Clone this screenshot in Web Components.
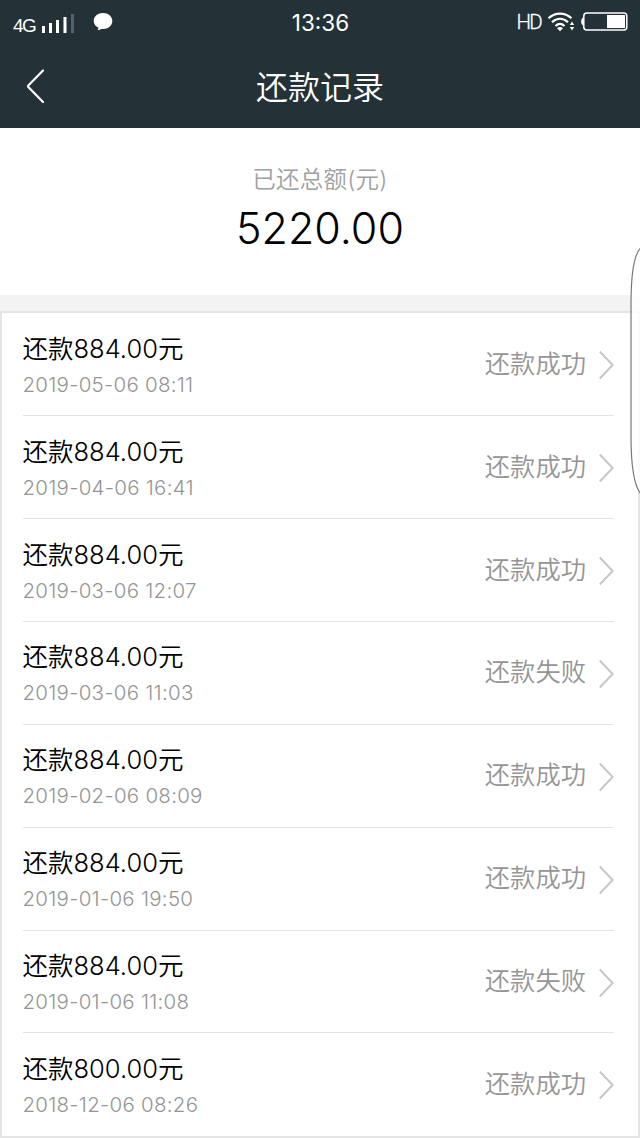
<!DOCTYPE html>
<html lang="zh-CN">
<head>
<meta charset="UTF-8">
<meta name="viewport" content="width=device-width, initial-scale=1.0">
<title>还款记录</title>
<style>
    body {
        margin: 0;
        background: #fff;
        font-family: Inter, "Noto Sans CJK SC", sans-serif;
        font-weight: 350;
    }
</style>
</head>
<body>
<repayment-page>
    <status-bar slot="status" time="13:36"></status-bar>
    <nav-header slot="header">还款记录</nav-header>
    <total-summary slot="summary" amount="5220.00">已还总额(元)</total-summary>
    <record-item amount="884.00" date="2019-05-06 08:11">还款成功</record-item>
    <record-item amount="884.00" date="2019-04-06 16:41">还款成功</record-item>
    <record-item amount="884.00" date="2019-03-06 12:07">还款成功</record-item>
    <record-item amount="884.00" date="2019-03-06 11:03">还款失败</record-item>
    <record-item amount="884.00" date="2019-02-06 08:09">还款成功</record-item>
    <record-item amount="884.00" date="2019-01-06 19:50">还款成功</record-item>
    <record-item amount="884.00" date="2019-01-06 11:08">还款失败</record-item>
    <record-item amount="800.00" date="2018-12-06 08:26">还款成功</record-item>
    <edge-handle slot="overlay"></edge-handle>
</repayment-page>

<script>
    class RepaymentPage extends HTMLElement {
        connectedCallback() {
            this.attachShadow({ mode: 'open' });
            this.shadowRoot.innerHTML = `
                <style>
                    :host {
                        display: flex;
                        flex-direction: column;
                        position: relative;
                        width: 640px;
                        height: 1138px;
                        overflow: hidden;
                    }

                    .top {
                        height: 128px;
                        background: #243137;
                        color: #fff;
                    }

                    .gap {
                        height: 16px;
                        background: #f3f3f3;
                    }

                    .list {
                        flex: 1;
                        box-sizing: border-box;
                        border: 2px solid #e5e5e5;
                        padding: 0 24px 0 21px;
                    }
                </style>
                <div class="top">
                    <slot name="status"></slot>
                    <slot name="header"></slot>
                </div>
                <slot name="summary"></slot>
                <div class="gap"></div>
                <div class="list"><slot></slot></div>
                <slot name="overlay"></slot>
            `;
        }
    }

    class StatusBar extends HTMLElement {
        connectedCallback() {
            this.attachShadow({ mode: 'open' });
            this.shadowRoot.innerHTML = `
                <style>
                    :host {
                        display: grid;
                        grid-template-columns: 1fr auto 1fr;
                        align-items: center;
                        height: 44px;
                        padding: 0 12px 0 13px;
                    }

                    .side {
                        display: flex;
                        align-items: center;
                    }

                    .right {
                        justify-content: flex-end;
                    }

                    .net {
                        width: 28px;
                        padding-top: 8px;
                        font: 19px "Liberation Sans", sans-serif;
                        letter-spacing: -1.5px;
                    }

                    .time {
                        padding-top: 1px;
                        font-size: 22.5px;
                        font-weight: 400;
                    }

                    .hd {
                        font: 300 20.5px Roboto, sans-serif;
                        letter-spacing: -1.7px;
                        margin-right: 5px;
                        -webkit-text-stroke: 0.3px #fff;
                    }

                    svg {
                        display: block;
                    }
                </style>
                <div class="side">
                    <span class="net">4G</span>
                    <svg width="74" height="44" fill="#fff">
                        <rect x="1" y="26" width="3" height="7"/>
                        <rect x="8" y="23" width="3" height="10"/>
                        <rect x="15" y="20" width="3" height="13"/>
                        <rect x="22.5" y="17" width="3" height="16"/>
                        <rect x="30" y="14" width="3" height="19" fill="#566167"/>
                        <path d="M62 13c5.2 0 9.3 3.5 9.3 8s-4.1 8-9.3 8l-2-.1c-.8.7-2 1.200-3.500 1 .7-.6 1-1.300 1-2.100-3-1.400-4.800-3.900-4.800-6.800 0-4.500 4.100-8 9.300-8z"/>
                    </svg>
                </div>
                <span class="time">${this.getAttribute('time')}</span>
                <div class="side right">
                    <span class="hd">HD</span>
                    <svg width="82" height="44" fill="none" stroke="#fff">
                        <g stroke-width="2.2">
                            <path d="M2.5 18.3c6.800-6.300 16.200-6.300 23 0"/>
                            <path d="M6 22.3c5-4.500 11-4.500 16 0"/>
                            <path d="M9.5 26c3-2.700 6-2.700 9 0"/>
                        </g>
                        <path d="M11 28.2c1.800-1.500 4.200-1.500 6 0l-3 3.100z" fill="#fff" stroke="none"/>
                        <path d="M26 21.5l2.200 3.500h-4.400zM26 30.500l2.200-3.500h-4.400z" fill="#fff" stroke="none"/>
                        <path d="M37 17.5c-2.500 1.500-2.500 6.500 0 8z" fill="#fff" stroke="none"/>
                        <rect x="37.8" y="12.9" width="43" height="17" rx="3" stroke-width="1.5"/>
                        <rect x="61" y="15" width="18" height="13" fill="#fff" stroke="none"/>
                    </svg>
                </div>
            `;
        }
    }

    class NavHeader extends HTMLElement {
        connectedCallback() {
            this.attachShadow({ mode: 'open' });
            this.shadowRoot.innerHTML = `
                <style>
                    :host {
                        display: grid;
                        grid-template-columns: 1fr auto 1fr;
                        align-items: center;
                        height: 84px;
                        padding: 0 24px;
                    }

                    .title {
                        padding-top: 3px;
                        font-size: 32px;
                        line-height: 81px;
                    }

                    svg {
                        display: block;
                    }
                </style>
                <svg width="24" height="36" fill="none" stroke="#fff" stroke-width="2.2" stroke-linecap="round" stroke-linejoin="round">
                    <path d="M19 2.5L4.3 17.5q-.7.8 0 1.6L19 34"/>
                </svg>
                <span class="title"><slot></slot></span>
            `;
        }
    }

    class TotalSummary extends HTMLElement {
        connectedCallback() {
            this.attachShadow({ mode: 'open' });
            this.shadowRoot.innerHTML = `
                <style>
                    :host {
                        display: flex;
                        flex-direction: column;
                        align-items: center;
                        box-sizing: border-box;
                        height: 167px;
                        padding-top: 35px;
                    }

                    .label {
                        color: #a0a0a0;
                        font-size: 23.5px;
                        letter-spacing: 0.2px;
                        line-height: 33px;
                    }

                    .amount {
                        color: #000;
                        font-size: 43px;
                        font-weight: 300;
                        line-height: 65px;
                    }
                </style>
                <span class="label"><slot></slot></span>
                <span class="amount">${this.getAttribute('amount')}</span>
            `;
        }
    }

    class RecordItem extends HTMLElement {
        connectedCallback() {
            this.attachShadow({ mode: 'open' });
            this.shadowRoot.innerHTML = `
                <style>
                    :host {
                        display: flex;
                        align-items: flex-start;
                        box-sizing: border-box;
                        height: 103px;
                        border-bottom: 1px solid #e3e3e3;
                        --shift: 0px;
                    }

                    :host(:nth-of-type(n+4)) {
                        --shift: 1px;
                    }

                    :host(:nth-of-type(7)) {
                        height: 102px;
                    }

                    :host(:last-of-type) {
                        border-bottom: 0;
                        --shift: 0px;
                    }

                    .info {
                        flex: 1;
                        display: flex;
                        flex-direction: column;
                        margin-left: -0.5px;
                        padding-top: calc(18px - var(--shift));
                        white-space: nowrap;
                    }

                    .title {
                        color: #000;
                        font-size: 25.5px;
                        line-height: 36px;
                    }

                    .num {
                        font-weight: 300;
                    }

                    .date {
                        color: #959595;
                        font-size: 20.5px;
                        font-weight: 300;
                        letter-spacing: 0.25px;
                        line-height: 35px;
                    }

                    .state {
                        padding-top: calc(32px - var(--shift));
                        color: #959595;
                        font-size: 25.3px;
                        line-height: 37px;
                    }

                    svg {
                        display: block;
                        margin: 37px 0 0 13px;
                    }
                </style>
                <div class="info">
                    <span class="title">还款<span class="num">${this.getAttribute('amount')}</span>元</span>
                    <span class="date">${this.getAttribute('date')}</span>
                </div>
                <span class="state"><slot></slot></span>
                <svg width="15" height="30" fill="none" stroke="#c7c7c7" stroke-width="2">
                    <path d="M.8 1.5L13.6 15L.8 28.5"/>
                </svg>
            `;
        }
    }

    // pull-out panel of the system, peeking in from the right edge
    class EdgeHandle extends HTMLElement {
        connectedCallback() {
            this.attachShadow({ mode: 'open' });
            this.shadowRoot.innerHTML = `
                <style>
                    :host {
                        position: absolute;
                        top: 246px;
                        right: 0;
                    }

                    svg {
                        display: block;
                    }
                </style>
                <svg width="10" height="250" fill="#fff" fill-opacity=".8" stroke="#777" stroke-width="1.2">
                    <path d="M11 1.5C4 8 1 25 1 58V190C1 223 4 240 11 248"/>
                </svg>
            `;
        }
    }

    customElements.define('repayment-page', RepaymentPage);
    customElements.define('status-bar', StatusBar);
    customElements.define('nav-header', NavHeader);
    customElements.define('total-summary', TotalSummary);
    customElements.define('record-item', RecordItem);
    customElements.define('edge-handle', EdgeHandle);
</script>
</body>
</html>
